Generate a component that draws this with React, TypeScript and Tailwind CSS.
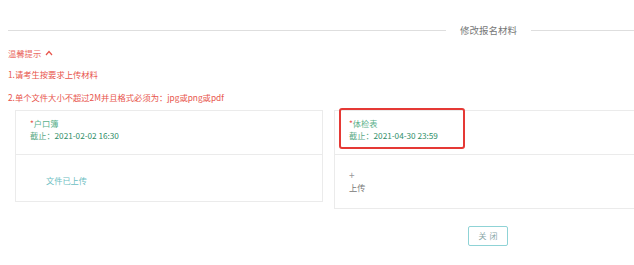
import React from "react";

const font = { fontFamily: '"Noto Sans CJK SC", "Noto Sans", sans-serif' };

export default function App() {
  return (
    <div
      className="w-[634px] h-[265px] overflow-hidden bg-white pt-[20px]"
      style={font}
    >
      {/* Header */}
      <div className="flex items-center h-[20px] pl-[8px]">
        <div className="w-[438px] h-px bg-[#dedede]" />
        <div className="px-[14px] text-[9.5px] leading-[12px] text-[#777] whitespace-nowrap">
          修改报名材料
        </div>
        <div className="flex-1 h-px bg-[#dedede]" />
      </div>

      {/* Tips */}
      <div className="pl-[8px] text-[8.3px] leading-[12px] text-[#e8554c]">
        <div className="mt-[7px] h-[12px] flex items-center gap-[4px] text-[#ea6a62]">
          <span>温馨提示</span>
          <svg width="8" height="6" viewBox="0 0 8 6" fill="none">
            <path d="M1 5 L4 1.5 L7 5" stroke="#e8554c" strokeWidth="1.2" />
          </svg>
        </div>
        <div className="mt-[9px] h-[12px] whitespace-nowrap">1.请考生按要求上传材料</div>
        <div className="mt-[11px] h-[12px] whitespace-nowrap">
          2.单个文件大小不超过2M并且格式必须为：jpg或png或pdf
        </div>
      </div>

      {/* Cards */}
      <div className="mt-[7px] pl-[15px] flex items-start gap-[11px]">
        <div className="w-[308px] shrink-0 border border-[#ebebeb]">
          <div className="h-[44px] border-b border-[#ebebeb] pt-[6px] pl-[14px] text-[8.2px] leading-[12px]">
            <div className="text-[#58b08a]">
              <span className="text-[#e8554c]">*</span>户口簿
            </div>
            <div className="text-[#5aa985]">
              截止：<span className="text-[#2f8e68]">2021-02-02 16:30</span>
            </div>
          </div>
          <div className="h-[46px] pt-[19px] pl-[30px] text-[8.2px] leading-[12px] text-[#6cbec2]">
            文件已上传
          </div>
        </div>

        <div className="w-[308px] shrink-0 flex flex-col">
          <div className="relative border border-[#ebebeb]">
            <div className="h-[44px] border-b border-[#ebebeb] pt-[6px] pl-[14px] text-[8.2px] leading-[12px]">
              <div className="text-[#58b08a]">
                <span className="text-[#e8554c]">*</span>体检表
              </div>
              <div className="text-[#5aa985]">
                截止：<span className="text-[#2f8e68]">2021-04-30 23:59</span>
              </div>
            </div>
            <div className="h-[53px] pt-[14px] pl-[14px] text-[8.2px] leading-[12px] text-[#777]">
              <div className="text-[10px] leading-[12px] text-[#999]">+</div>
              <div>上传</div>
            </div>
            <div className="absolute left-[4px] top-[-3px] w-[126px] h-[41px] border-2 border-[#e53935] rounded-[3px]" />
          </div>
          <div className="mt-[17px] flex justify-center">
            <button className="w-[40px] h-[20px] border border-[#8fd3d6] rounded-[2px] text-[8px] leading-[12px] text-[#8aa8a8] tracking-[3px] pl-[3px] bg-white">
              关闭
            </button>
          </div>
        </div>
      </div>
    </div>
  );
}
